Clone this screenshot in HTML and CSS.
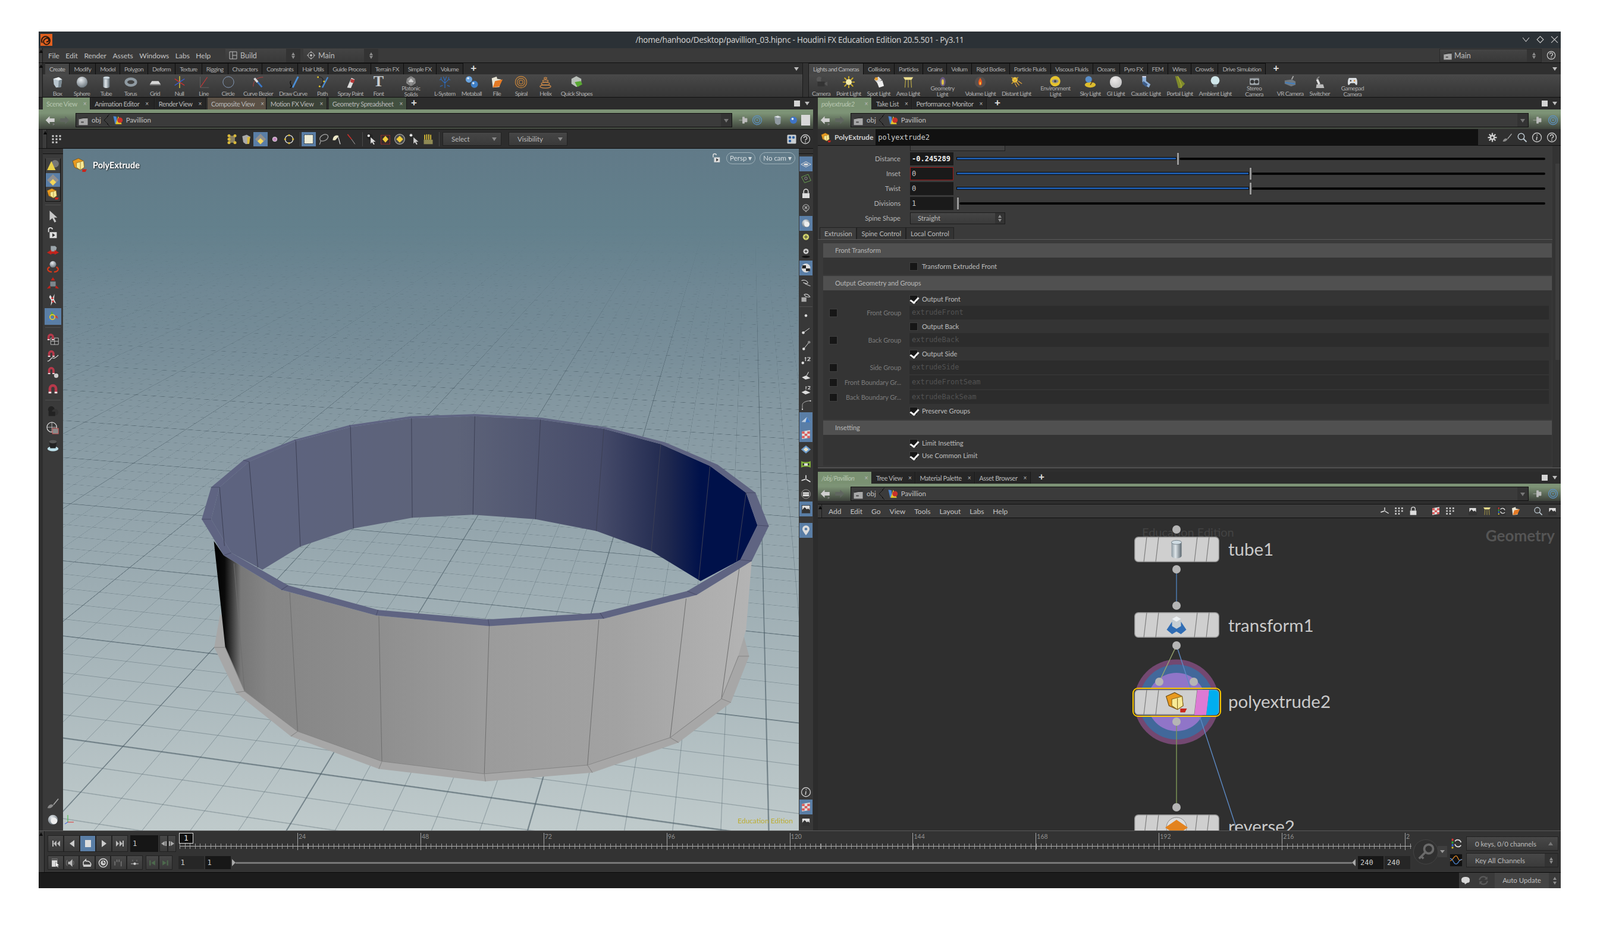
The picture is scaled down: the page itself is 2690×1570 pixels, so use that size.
FILE: index.html
```html
<!DOCTYPE html>
<html lang="en">
<head>
<meta charset="utf-8">
<title>Houdini FX</title>
<link rel="stylesheet" href="styles.css">
</head>
<body>
<svg class="defs" width="0" height="0">
<defs>
<linearGradient id="gMetal" x1="0" x2="1"><stop offset="0" stop-color="#8b98a0"/><stop offset=".4" stop-color="#dfe6ea"/><stop offset="1" stop-color="#59656d"/></linearGradient>
<radialGradient id="gSphere" cx=".4" cy=".3" r=".8"><stop offset="0" stop-color="#e8ecef"/><stop offset="1" stop-color="#5d6870"/></radialGradient>
<symbol id="box" viewBox="0 0 24 24"><path d="M4 6l10-3 6 4-2 14-9 1-4-6z" fill="#b9c6cf"/><path d="M4 6l10 3 6-2-6-4z" fill="#eef2f4"/><path d="M14 9l6-2-2 14-5 1z" fill="#7b8992"/></symbol>
<symbol id="sphere" viewBox="0 0 24 24"><circle cx="12" cy="12" r="10" fill="url(#gSphere)"/></symbol>
<symbol id="tube" viewBox="0 0 24 24"><path d="M6 4h12v16a6 3 0 0 1-12 0z" fill="url(#gMetal)"/><ellipse cx="12" cy="4" rx="6" ry="2.4" fill="#cfdbe2" stroke="#6b7780" stroke-width=".6"/></symbol>
<symbol id="torus" viewBox="0 0 24 24"><ellipse cx="12" cy="12" rx="9" ry="6" fill="none" stroke="#8f9aa2" stroke-width="5"/></symbol>
<symbol id="grid" viewBox="0 0 24 24"><path d="M6 10h12l4 6H2z" fill="#d8d8d8"/><path d="M2 16h20v2H2z" fill="#777"/></symbol>
<symbol id="null" viewBox="0 0 24 24"><path d="M12 1v22" stroke="#d8c33a" stroke-width="1.6"/><path d="M3 6l18 12" stroke="#d83030" stroke-width="1.6"/><path d="M21 6L3 18" stroke="#3a62d8" stroke-width="1.6"/></symbol>
<symbol id="line" viewBox="0 0 24 24"><path d="M5 22L18 3" stroke="#c03838" stroke-width="1.4"/><path d="M5 2v20h16" stroke="#666" stroke-width="1" fill="none"/></symbol>
<symbol id="circle" viewBox="0 0 24 24"><circle cx="12" cy="12" r="10" fill="none" stroke="#8ba2c2" stroke-width="1"/></symbol>
<symbol id="bezier" viewBox="0 0 24 24"><path d="M3 20C3 6 14 3 21 3" stroke="#c04040" fill="none"/><path d="M5 5l14 16" stroke="#3b78c8" stroke-width="3"/><path d="M5 5l6 7" stroke="#d8d8d8" stroke-width="4"/></symbol>
<symbol id="draw" viewBox="0 0 24 24"><path d="M6 22c8-2-4-8 2-12" stroke="#111" stroke-width="1.6" fill="none"/><path d="M11 22L21 2" stroke="#4b8fd8" stroke-width="3"/></symbol>
<symbol id="pathi" viewBox="0 0 24 24"><path d="M4 3c10-2 14 8 2 18" stroke="#222" fill="none" stroke-width="1.4"/><circle cx="4" cy="3" r="1.6" fill="#e3c62f"/><circle cx="15" cy="11" r="1.6" fill="#e3c62f"/><circle cx="7" cy="20" r="1.6" fill="#e3c62f"/><path d="M12 22L22 3" stroke="#4b8fd8" stroke-width="2.4"/></symbol>
<symbol id="spray" viewBox="0 0 24 24"><path d="M6 22L14 4l6 3-7 16z" fill="#dcdcdc"/><path d="M13 6l7 2-2 6-6-2z" fill="#b83a3a"/></symbol>
<symbol id="platonic" viewBox="0 0 24 24"><path d="M12 1l9 6 1 9-10 7L2 16l1-9z" fill="#8f8f8f"/><path d="M12 6l6 8H6z" fill="#d0d0d0"/><path d="M12 1v5M3 7l3 7M21 7l-3 7M12 23l-6-9M12 23l6-9" stroke="#4b4b4b" stroke-width=".7"/></symbol>
<symbol id="lsys" viewBox="0 0 24 24"><path d="M12 23V9M12 14L5 7M12 14l7-7M12 9L9 2M12 9l3-7M5 7L2 8M5 7V3M19 7l3 1M19 7V3M8 18l-5 2M16 18l5 2" stroke="#2c6ec4" stroke-width="1.2" fill="none"/></symbol>
<symbol id="metaball" viewBox="0 0 24 24"><circle cx="7" cy="7" r="6" fill="#6aa4e0"/><circle cx="17" cy="16" r="6.5" fill="#3f7fc6"/><circle cx="5.500" cy="5" r="2" fill="#dbe9f7"/><circle cx="15" cy="14" r="2" fill="#dbe9f7"/></symbol>
<symbol id="file" viewBox="0 0 24 24"><path d="M3 5l9-3 1 4 7 1-3 14-12 1z" fill="#e8e4d4"/><path d="M9 10l14-3-6 13-12 2z" fill="#e57a25"/></symbol>
<symbol id="spiral" viewBox="0 0 24 24"><circle cx="12" cy="12" r="10.500" fill="none" stroke="#d28a3a" stroke-width="1.2"/><circle cx="12" cy="12" r="7" fill="none" stroke="#d28a3a" stroke-width="1.2"/><circle cx="12" cy="12" r="3.500" fill="none" stroke="#d28a3a" stroke-width="1.2"/></symbol>
<symbol id="helix" viewBox="0 0 24 24"><g fill="none" stroke="#cf8a48" stroke-width="1.3"><ellipse cx="12" cy="20" rx="10" ry="3"/><ellipse cx="12" cy="15" rx="7.500" ry="2.500"/><ellipse cx="12" cy="10" rx="5" ry="2"/><ellipse cx="12" cy="5" rx="2.500" ry="1.500"/></g></symbol>
<symbol id="quick" viewBox="0 0 24 24"><path d="M12 1l9 5v9l-9 6-9-6V6z" fill="#b9bfb9"/><path d="M9 12l11-2 3 6-9 5z" fill="#59a832"/></symbol>
<symbol id="camera" viewBox="0 0 24 24"><circle cx="8" cy="7" r="5" fill="#555"/><circle cx="16" cy="8" r="5" fill="#444"/><rect x="5" y="11" width="13" height="9" fill="#333"/><path d="M18 14l5-3v8l-5-3z" fill="#555"/></symbol>
<symbol id="plight" viewBox="0 0 24 24"><circle cx="12" cy="12" r="5.500" fill="#f4ecae"/><path d="M12 1v5M12 18v5M1 12h5M18 12h5M4 4l4 4M16 16l4 4M20 4l-4 4M8 16l-4 4" stroke="#e3bd22" stroke-width="1.800"/></symbol>
<symbol id="spot" viewBox="0 0 24 24"><path d="M4 7l8-5 6 6-8 6z" fill="#d8d8d8"/><path d="M9 12l10-3 3 10-9 3z" fill="#eee"/><circle cx="8" cy="6" r="3" fill="#e09a30"/></symbol>
<symbol id="area" viewBox="0 0 24 24"><path d="M3 3h18l-3 5H6z" fill="#eddf8e"/><path d="M7 8l-1 14M12 8v14M17 8l1 14" stroke="#c6b34a" stroke-width="1.200"/></symbol>
<symbol id="geol" viewBox="0 0 24 24"><ellipse cx="12" cy="13" rx="6" ry="10" fill="#6b5a80"/><ellipse cx="12" cy="14" rx="2.500" ry="6" fill="#e0c44a"/></symbol>
<symbol id="voll" viewBox="0 0 24 24"><circle cx="12" cy="12" r="10" fill="#57504e"/><path d="M12 4c5 6 4 14 0 14s-5-8 0-14z" fill="#e8571c"/><path d="M12 11c2 3 1 6 0 6s-2-3 0-6z" fill="#f6d34a"/></symbol>
<symbol id="dist" viewBox="0 0 24 24"><circle cx="9" cy="8" r="5" fill="#eac64a"/><path d="M3 3l12 12M15 3L3 15" stroke="#d8a526" stroke-width="1.500"/><path d="M12 12l5 6M9 14l4 7M15 10l7 5" stroke="#d39c3f" stroke-width="1.500"/></symbol>
<symbol id="env" viewBox="0 0 24 24"><circle cx="12" cy="12" r="11" fill="#e6c32e"/><ellipse cx="12" cy="12" rx="7" ry="4" fill="#8c8c8c"/><circle cx="12" cy="12" r="2.500" fill="#444"/></symbol>
<symbol id="sky" viewBox="0 0 24 24"><ellipse cx="12" cy="17" rx="10" ry="5" fill="#dcbc2e"/><circle cx="9" cy="7" r="6" fill="#5a8ec8"/><path d="M12 17l7-10" stroke="#5a3a1e" stroke-width="1.500"/></symbol>
<symbol id="gi" viewBox="0 0 24 24"><circle cx="12" cy="12" r="11" fill="url(#gSphere)"/><circle cx="12" cy="12" r="11" fill="#efe9e6" opacity=".65"/></symbol>
<symbol id="caustic" viewBox="0 0 24 24"><path d="M6 1h7v9l8 6-3 6-10-6-2-5z" fill="#8eb0d8"/><path d="M6 1h7v2H6z" fill="#dde"/><path d="M8 10l8 6-3 5-7-6z" fill="#3c5c88"/></symbol>
<symbol id="portal" viewBox="0 0 24 24"><path d="M3 1h5l13 14-7 8H9z" fill="#7e8a2c"/><path d="M8 1l6 16v6" stroke="#c7bd3a" fill="none"/></symbol>
<symbol id="ambient" viewBox="0 0 24 24"><circle cx="12" cy="9" r="8" fill="#cfe6ea"/><path d="M9 16h6v5H9z" fill="#7a8488"/></symbol>
<symbol id="stereo" viewBox="0 0 24 24"><rect x="2" y="5" width="20" height="15" rx="2" fill="#a2a9ae"/><circle cx="7.500" cy="13" r="4" fill="#333"/><circle cx="16.500" cy="13" r="4" fill="#333"/><path d="M3 5l18-2v3H3z" fill="#555"/></symbol>
<symbol id="vr" viewBox="0 0 24 24"><path d="M2 9l13-2 7 4v6l-8 3-12-5z" fill="#6f7880"/><path d="M3 13l18 2" stroke="#3e7ec2" stroke-width="2"/><path d="M15 7l3-6" stroke="#aaa" stroke-width="2"/></symbol>
<symbol id="switch" viewBox="0 0 24 24"><path d="M5 23l1-7h12l2 7z" fill="#bbb"/><path d="M11 16L7 7" stroke="#ddd" stroke-width="4"/><path d="M6 7l5-5" stroke="#888" stroke-width="2"/></symbol>
<symbol id="pad" viewBox="0 0 24 24"><path d="M5 5h14c3 0 4 13 2 15-2 1-4-4-5-4H8c-1 0-3 5-5 4C1 18 2 5 5 5z" fill="#d9dde0"/><circle cx="8" cy="11" r="1.600" fill="#333"/><circle cx="16" cy="11" r="1.600" fill="#e08b2a"/></symbol>
<symbol id="polyx" viewBox="0 0 24 24"><path d="M1 6l9-4 8 4 1 10-6 4-9-4z" fill="#e89a20" stroke="#6b4a12" stroke-width=".7"/><path d="M7 9l11-3 1 10-6 4-6-4z" fill="#f7ea96" stroke="#8a6a20" stroke-width=".7"/><path d="M13 8v12" stroke="#8a6a20" stroke-width=".7"/><path d="M16 19h7l-2 4h-5z" fill="#c8261c"/></symbol>
<symbol id="back" viewBox="0 0 24 24"><path d="M10 3v5h11v8H10v5L1 12z" fill="#cfcfcf"/><path d="M17 18l5 3-5 3z" fill="#777"/></symbol>
<symbol id="fwd" viewBox="0 0 24 24"><path d="M14 3v5H3v8h11v5l9-9z" fill="#606660"/></symbol>
<symbol id="clap" viewBox="0 0 24 24"><rect x="2" y="8" width="20" height="15" fill="#a9a9a9"/><path d="M2 8l20-5v3L2 10z" fill="#333"/><path d="M7 15h6v3H7z" fill="#555"/></symbol>
<symbol id="obj" viewBox="0 0 24 24"><path d="M2 3l7 1 2 14-5 3z" fill="#4c86d0"/><path d="M13 3l8 18H7z" fill="#e5c62c"/><circle cx="17" cy="12" r="6" fill="#c8322a"/></symbol>
<symbol id="pin" viewBox="0 0 24 24"><path d="M2 12h8M10 5h4v14h-4zM14 8h6v8h-6z" stroke="#bbb" fill="#bbb" stroke-width="1"/></symbol>
<symbol id="target" viewBox="0 0 24 24"><circle cx="12" cy="12" r="10" fill="none" stroke="#5d8fbc" stroke-width="1.800"/><circle cx="12" cy="12" r="6" fill="none" stroke="#5d8fbc" stroke-width="1.800"/><circle cx="12" cy="12" r="1.600" fill="#5d8fbc"/></symbol>
<symbol id="cubeg" viewBox="0 0 24 24"><path d="M5 4l8-2 7 3-1 15-6 3-6-4z" fill="#909aa1"/><path d="M5 4l8 3 7-2-7-3z" fill="#d8dde0"/></symbol>
<symbol id="conesph" viewBox="0 0 24 24"><circle cx="16" cy="8" r="7" fill="#777"/><path d="M9 3l8 17H1z" fill="#e8cf4a"/></symbol>
<symbol id="dotb" viewBox="0 0 24 24"><circle cx="12" cy="12" r="8" fill="#3f74c6"/><circle cx="10" cy="9" r="2.500" fill="#e0ebf8"/></symbol>
<symbol id="help" viewBox="0 0 24 24"><circle cx="12" cy="12" r="10" fill="none" stroke="#c9c9c9" stroke-width="1.800"/><path d="M8.500 9.500a3.500 3.500 0 1 1 5 3c-1 .6-1.500 1-1.500 2.500" fill="none" stroke="#c9c9c9" stroke-width="2"/><circle cx="12" cy="18" r="1.300" fill="#c9c9c9"/></symbol>
<symbol id="info" viewBox="0 0 24 24"><circle cx="12" cy="12" r="10" fill="none" stroke="#c9c9c9" stroke-width="1.800"/><path d="M12 10l-1 8" stroke="#c9c9c9" stroke-width="2.200"/><circle cx="12.500" cy="6.500" r="1.300" fill="#c9c9c9"/></symbol>
<symbol id="gear" viewBox="0 0 24 24"><circle cx="12" cy="12" r="6" fill="#ccc"/><path d="M12 2v20M2 12h20M5 5l14 14M19 5L5 19" stroke="#ccc" stroke-width="3"/><circle cx="12" cy="12" r="2.500" fill="#333"/></symbol>
<symbol id="brush" viewBox="0 0 24 24"><path d="M2 21c2-7 8-8 11-5-3 5-7 6-11 5z" fill="#8a8a8a"/><path d="M13 15L22 4" stroke="#aaa" stroke-width="1.600"/></symbol>
<symbol id="mag" viewBox="0 0 24 24"><circle cx="10" cy="10" r="7" fill="none" stroke="#bcc8d0" stroke-width="2"/><path d="M15 15l7 7" stroke="#bcc8d0" stroke-width="2.500"/></symbol>
<symbol id="ptsel" viewBox="0 0 24 24"><path d="M6 5h12v14H6z" fill="#8a8060"/><circle cx="6" cy="5" r="3" fill="#d9b93a"/><circle cx="18" cy="5" r="3" fill="#d9b93a"/><circle cx="6" cy="12" r="3" fill="#d9b93a"/><circle cx="18" cy="19" r="3" fill="#d9b93a"/><circle cx="6" cy="19" r="3" fill="#d9b93a"/></symbol>
<symbol id="cubey" viewBox="0 0 24 24"><path d="M4 6l9-3 7 4-2 14-7 1-5-4z" fill="#a9a9a9"/><path d="M14 8l6-1-2 14-4 1z" fill="#d9b93a"/></symbol>
<symbol id="diam" viewBox="0 0 24 24"><path d="M12 1l11 11-11 11L1 12z" fill="#8f8f8f"/><path d="M12 10l6 6-6 6-6-6z" fill="#f3d75a"/></symbol>
<symbol id="dot" viewBox="0 0 24 24"><circle cx="12" cy="12" r="4.500" fill="#c48ac0" stroke="#eee" stroke-width="1"/></symbol>
<symbol id="ringp" viewBox="0 0 24 24"><circle cx="12" cy="12" r="8" fill="none" stroke="#ddd" stroke-width="1.600"/><circle cx="12" cy="4" r="2" fill="#d9b93a"/><circle cx="4" cy="12" r="2" fill="#d9b93a"/><circle cx="20" cy="12" r="2" fill="#d9b93a"/><circle cx="12" cy="20" r="2" fill="#d9b93a"/></symbol>
<symbol id="rectsel" viewBox="0 0 24 24"><rect x="3" y="3" width="18" height="18" fill="#ecebd6" stroke="#111" stroke-dasharray="2 1"/></symbol>
<symbol id="lasso" viewBox="0 0 24 24"><ellipse cx="14" cy="9" rx="9" ry="6" fill="none" stroke="#aaa" stroke-width="1.500" transform="rotate(-30 14 9)"/><path d="M8 15L5 23" stroke="#aaa" stroke-width="1.400"/></symbol>
<symbol id="brushs" viewBox="0 0 24 24"><path d="M3 14c0-9 8-12 12-8l-7 8z" fill="#eee8c8"/><path d="M14 8l4 14" stroke="#ddd" stroke-width="1.500"/></symbol>
<symbol id="laser" viewBox="0 0 24 24"><path d="M4 2l8 10" stroke="#c8302a" stroke-width="2"/><path d="M12 12l7 10" stroke="#bbb" stroke-width="1"/></symbol>
<symbol id="arrow" viewBox="0 0 24 24"><path d="M6 1v18l5-4 4 8 3-2-4-7h6z" fill="#c8c8c8"/></symbol>
<symbol id="picka" viewBox="0 0 24 24"><circle cx="9" cy="7" r="6" fill="#222"/><circle cx="7" cy="5" r="2.500" fill="#eee"/><path d="M11 8v13l3-3 3 5 2-1-3-5h5z" fill="#ddd"/></symbol>
<symbol id="pickb" viewBox="0 0 24 24"><rect x="3" y="4" width="18" height="18" fill="#3a2b2b" stroke="#c33" stroke-dasharray="2 1"/><path d="M12 5l6 7-6 7-6-7z" fill="#f0cc3a"/></symbol>
<symbol id="pickc" viewBox="0 0 24 24"><circle cx="12" cy="12" r="10" fill="#4a4a4a" stroke="#aaa" stroke-width="1.400"/><path d="M12 5l7 7-7 7-7-7z" fill="#f0cc3a"/></symbol>
<symbol id="pickd" viewBox="0 0 24 24"><path d="M6 1v6M3 4h6M4 2l4 4M8 2L4 6" stroke="#eee" stroke-width="1.300"/><path d="M11 8v13l3-3 3 5 2-1-3-5h5z" fill="#ccc"/></symbol>
<symbol id="picke" viewBox="0 0 24 24"><path d="M3 13h18v9H3z" fill="#8f8a55"/><path d="M5 13V3M9 13V2M13 13V2M17 13V3" stroke="#e6c83a" stroke-width="2"/></symbol>
<symbol id="lock" viewBox="0 0 24 24"><rect x="6" y="10" width="13" height="11" fill="#ddd"/><path d="M4 10V5c0-4 7-4 7 0" fill="none" stroke="#ddd" stroke-width="2"/><path d="M11 12v7l5-3.500z" fill="#333"/></symbol>
<symbol id="xf" viewBox="0 0 24 24"><path d="M8 5l8 0 3 3-2 7H8z" fill="#9ba5ab"/><path d="M1 17l8-5v3h6v-3l8 5-8 4v-2H9v2z" fill="#c4231b"/></symbol>
<symbol id="xfb" viewBox="0 0 24 24"><path d="M1 17l6-9 5 2 5-2 6 9-6 5-5-3-5 3z" fill="#2f6cb4"/><path d="M7 5l5-3 5 3v8l-5 3-5-3z" fill="#c6ced4"/><path d="M7 5l5 3 5-3-5-3z" fill="#eef1f3"/></symbol>
<symbol id="rot" viewBox="0 0 24 24"><circle cx="12" cy="8" r="6" fill="url(#gSphere)"/><path d="M6 13c-7 3-3 9 4 9M18 13c7 3 3 9-4 9" fill="none" stroke="#d4391b" stroke-width="2.500"/></symbol>
<symbol id="scl" viewBox="0 0 24 24"><path d="M7 9h10v9H7z" fill="#7d878d"/><path d="M12 1l4 6H8zM1 22l5-6 2 5zM23 22l-5-6-2 5z" fill="#c4231b"/></symbol>
<symbol id="hand" viewBox="0 0 24 24"><path d="M7 3l4 6 4-8-1 10 4 8-6-4-4 8 1-10-4-6z" fill="#ddd"/><circle cx="11" cy="9" r="2" fill="#c33"/><circle cx="12" cy="15" r="2" fill="#c33"/></symbol>
<symbol id="gizmo" viewBox="0 0 24 24"><path d="M10 2l4 9H7z" fill="#5aa63c"/><path d="M12 12l10 4-3-6z" fill="#c8423c"/><path d="M10 12l-8 8 8-1z" fill="#4c82c8"/><circle cx="11" cy="13" r="4.500" fill="none" stroke="#e8c92e" stroke-width="2"/></symbol>
<symbol id="mg" viewBox="0 0 24 24"><path d="M4 20V11a8 8 0 0 1 16 0v9h-5v-9a3 3 0 0 0-6 0v9z" fill="#b5394a"/><path d="M4 17h5v3H4zM15 17h5v3h-5z" fill="#eee"/></symbol>
<symbol id="mgg" viewBox="0 0 24 24"><path d="M8 10h14v12H8zM15 10v12M8 16h14" fill="#333" stroke="#ccc"/><path d="M2 14V8a6 6 0 0 1 12 0v6h-4V8a2 2 0 0 0-4 0v6z" fill="#b5394a"/><path d="M2 12h4v2H2zM10 12h4v2h-4z" fill="#eee"/></symbol>
<symbol id="mgc" viewBox="0 0 24 24"><path d="M2 22c6 0 6-8 10-6s6-2 10-5" fill="none" stroke="#ddd" stroke-width="1.300"/><path d="M3 14V8a6 6 0 0 1 12 0v6h-4V8a2 2 0 0 0-4 0v6z" fill="#b5394a"/><path d="M3 12h4v2H3zM11 12h4v2h-4z" fill="#eee"/></symbol>
<symbol id="mgb" viewBox="0 0 24 24"><circle cx="18" cy="18" r="4" fill="#ccc"/><path d="M3 15V8a6 6 0 0 1 12 0v7h-4V8a2 2 0 0 0-4 0v7z" fill="#b5394a"/><path d="M3 13h4v2H3zM11 13h4v2h-4z" fill="#eee"/></symbol>
<symbol id="gizcam" viewBox="0 0 24 24"><circle cx="9" cy="8" r="6" fill="#222"/><circle cx="16" cy="13" r="6" fill="#333"/><rect x="4" y="12" width="12" height="8" fill="#222"/></symbol>
<symbol id="globe" viewBox="0 0 24 24"><circle cx="10" cy="10" r="9" fill="none" stroke="#ddd" stroke-width="1.300"/><path d="M1 10h18M10 1v18" stroke="#ddd" stroke-width=".8"/><rect x="11" y="12" width="11" height="10" fill="#8a8a8a" stroke="#d05050"/></symbol>
<symbol id="lens" viewBox="0 0 24 24"><ellipse cx="12" cy="19" rx="10" ry="4.500" fill="#bde0ea"/><path d="M5 6h14l-2 12H7z" fill="#222"/><ellipse cx="12" cy="6" rx="7" ry="3" fill="#555"/></symbol>
<symbol id="view" viewBox="0 0 24 24"><path d="M1 13l11-6 11 6-11 6z" fill="none" stroke="#ddd" stroke-width="1.300"/><ellipse cx="12" cy="13" rx="5" ry="2.500" fill="#ddd"/></symbol>
<symbol id="vieweye" viewBox="0 0 24 24"><path d="M2 8l15-6 6 14-14 5z" fill="none" stroke="#68a050" stroke-width="1.300"/><circle cx="12" cy="11" r="3" fill="none" stroke="#aaa"/></symbol>
<symbol id="padlock" viewBox="0 0 24 24"><rect x="4" y="11" width="16" height="11" fill="#ddd"/><path d="M7 11V7a5 5 0 0 1 10 0v4" fill="none" stroke="#ddd" stroke-width="2"/></symbol>
<symbol id="bulbx" viewBox="0 0 24 24"><circle cx="12" cy="10" r="7" fill="none" stroke="#bbb" stroke-width="1.400"/><path d="M9 7l6 6M15 7l-6 6M10 19h4" stroke="#bbb" stroke-width="1.500"/></symbol>
<symbol id="ball" viewBox="0 0 24 24"><circle cx="12" cy="12" r="9" fill="url(#gSphere)"/><circle cx="14" cy="14" r="6" fill="#eee"/></symbol>
<symbol id="bulbp" viewBox="0 0 24 24"><circle cx="12" cy="9" r="7" fill="#cfcf6a"/><path d="M9 19h6M12 5v8M8 9h8" stroke="#333" stroke-width="1.400"/></symbol>
<symbol id="bulbg" viewBox="0 0 24 24"><circle cx="12" cy="8" r="6" fill="#ccc"/><ellipse cx="12" cy="20" rx="9" ry="2.500" fill="#111"/><path d="M9 8h6M12 5v6" stroke="#222" stroke-width="1.400"/></symbol>
<symbol id="checker" viewBox="0 0 24 24"><circle cx="12" cy="12" r="10" fill="#ddd"/><path d="M4 6h8v7H3zM12 13h9v6h-9z" fill="#222"/></symbol>
<symbol id="glass" viewBox="0 0 24 24"><path d="M2 7c6-3 12 0 14 4s-8 2-10 0M10 14l12 5" fill="none" stroke="#ccc" stroke-width="1.500"/></symbol>
<symbol id="glass2" viewBox="0 0 24 24"><path d="M8 5c5-3 10 0 13 5-5 1-10 0-13-5z" fill="none" stroke="#ccc" stroke-width="1.500"/><rect x="2" y="11" width="11" height="10" fill="#aaa"/></symbol>
<symbol id="pt" viewBox="0 0 24 24"><circle cx="12" cy="12" r="3" fill="#ddd"/></symbol>
<symbol id="nrm" viewBox="0 0 24 24"><circle cx="6" cy="17" r="3" fill="#ddd"/><path d="M6 17L20 7" stroke="#ddd" stroke-width="1.300"/></symbol>
<symbol id="nrm2" viewBox="0 0 24 24"><circle cx="7" cy="20" r="3" fill="#ddd"/><path d="M7 20L19 5" stroke="#ddd" stroke-width="1.300"/><circle cx="19" cy="5" r="3" fill="#888"/></symbol>
<symbol id="ptn" viewBox="0 0 24 24"><circle cx="5" cy="18" r="3" fill="#ddd"/><path d="M9 7h4M11 5v9M15 6h6v2l-5 5h6" stroke="#ddd" stroke-width="1.600" fill="none"/></symbol>
<symbol id="prm" viewBox="0 0 24 24"><path d="M3 17l9-4 10 6-11 3z" fill="#ddd"/><path d="M13 14l5-9" stroke="#ccc" stroke-width="1.500"/></symbol>
<symbol id="prn" viewBox="0 0 24 24"><path d="M2 17l9-4 11 5-11 4z" fill="#ddd"/><path d="M11 5h3M12 4v7M16 4h5v2l-4 4h5" stroke="#ddd" stroke-width="1.400" fill="none"/></symbol>
<symbol id="crv" viewBox="0 0 24 24"><path d="M4 22V12C4 7 12 3 22 3" fill="none" stroke="#bbb" stroke-width="1.200"/><circle cx="4" cy="22" r="1.500" fill="#ddd"/><circle cx="22" cy="3" r="1.500" fill="#ddd"/></symbol>
<symbol id="shade" viewBox="0 0 24 24"><path d="M2 17L14 6l8 12z" fill="#bfcfe0"/><path d="M14 6l8 12H11z" fill="#3d78c4"/></symbol>
<symbol id="chk" viewBox="0 0 24 24"><path d="M3 5l18-3v17l-18 3z" fill="#ddd"/><path d="M3 5h6v5H3zM15 5h6v5h-6zM9 10h6v5H9zM3 15h6v5H3zM15 15h6v5h-6z" fill="#d95a5a"/></symbol>
<symbol id="diab" viewBox="0 0 24 24"><path d="M12 3l11 9-11 9L1 12z" fill="#6d9ccc"/><path d="M12 7l6 5-6 5-6-5z" fill="#e7e0c8"/></symbol>
<symbol id="cage" viewBox="0 0 24 24"><path d="M3 7c4 2 14 2 18 0v10c-4-2-14-2-18 0z" fill="none" stroke="#84b53a" stroke-width="3"/><rect x="8" y="10" width="8" height="5" fill="#ddd"/></symbol>
<symbol id="tri" viewBox="0 0 24 24"><path d="M12 3v8M2 15l9-3M22 18l-10-6" stroke="#eee" stroke-width="2"/><circle cx="12" cy="12" r="2" fill="#999"/></symbol>
<symbol id="barc" viewBox="0 0 24 24"><circle cx="12" cy="12" r="10" fill="none" stroke="#aaa" stroke-width="1.200"/><rect x="5" y="8" width="14" height="9" fill="#ddd"/><path d="M5 12h14" stroke="#555"/></symbol>
<symbol id="bg" viewBox="0 0 24 24"><rect x="3" y="4" width="18" height="17" fill="#ddd" stroke="#222"/><path d="M3 15l6-7 5 5 3-2 4 4v6H3z" fill="#333"/></symbol>
<symbol id="mappin" viewBox="0 0 24 24"><path d="M12 23C5 14 4 11 4 9a8 8 0 0 1 16 0c0 2-1 5-8 14z" fill="#ddd"/><circle cx="12" cy="9" r="3" fill="#5a7ea6"/></symbol>
<symbol id="keys" viewBox="0 0 24 24"><circle cx="16" cy="8" r="6" fill="none" stroke="#6a6a6a" stroke-width="3"/><path d="M12 12L3 21M6 18l3 3" stroke="#6a6a6a" stroke-width="3"/></symbol>
<symbol id="sync" viewBox="0 0 24 24"><path d="M3 11a9 9 0 0 1 16-4M21 13a9 9 0 0 1-16 4" fill="none" stroke="#5a5a5a" stroke-width="3"/><path d="M21 3v7h-7zM3 21v-7h7z" fill="#5a5a5a"/></symbol>
<symbol id="brain" viewBox="0 0 24 24"><path d="M3 12c-2-5 4-9 9-8 5-1 11 3 9 8 1 3-2 6-5 5-2 2-4 2-5 4l-2-4c-3 1-7-2-6-5z" fill="#d8d8d8"/></symbol>
<symbol id="chan" viewBox="0 0 24 24"><rect x="1" y="1" width="22" height="22" fill="#333"/><path d="M4 3h3v4H4z" fill="#d33"/><path d="M4 8h3v4H4z" fill="#3a3"/><path d="M4 13h3v4H4z" fill="#36d"/><path d="M4 18h3v3H4z" fill="#dc3"/><path d="M10 8a6 6 0 0 1 11 2M21 15a6 6 0 0 1-11-2" fill="none" stroke="#ddd" stroke-width="2"/></symbol>
<symbol id="wave" viewBox="0 0 24 24"><rect x="1" y="1" width="22" height="22" fill="#111"/><path d="M1 13c5 0 7-9 11-9s4 14 11 6" fill="none" stroke="#e08b2a" stroke-width="1.400"/><path d="M1 9c6 0 6 10 11 10s5-10 11-8" fill="none" stroke="#4c82c8" stroke-width="1.400"/></symbol>
<symbol id="dots" viewBox="0 0 24 24"><path d="M2 3h4v4H2zM10 3h4v4h-4zM18 3h4v4h-4zM2 10h4v4H2zM10 10h4v4h-4zM18 10h4v4h-4zM2 17h4v4H2zM10 17h4v4h-4z" fill="#ccc"/></symbol>
<symbol id="icon-mv" viewBox="0 0 24 24"><rect x="2" y="2" width="20" height="20" rx="2" fill="#c9cdd0"/><circle cx="8" cy="8" r="3" fill="#2e5f9e"/><circle cx="16" cy="8" r="3" fill="#2e5f9e"/><circle cx="8" cy="16" r="3" fill="#2e5f9e"/></symbol>
<symbol id="docc" viewBox="0 0 24 24"><rect x="3" y="2" width="13" height="19" fill="#ddd"/><path d="M3 2h13v4H3z" fill="#555"/><path d="M12 10v12l3-3 2 4 2-1-2-4h4z" fill="#fff" stroke="#222" stroke-width=".6"/></symbol>
<symbol id="speak" viewBox="0 0 24 24"><path d="M5 9h4l6-6v18l-6-6H5z" fill="#bbb"/><path d="M17 7c2 3 2 7 0 10M3 5c-3 5-3 9 0 14" fill="none" stroke="#999"/></symbol>
<symbol id="undo" viewBox="0 0 24 24"><path d="M3 10l6-6v4c7-1 12 2 12 9H3z" fill="none" stroke="#ddd" stroke-width="2"/><path d="M3 18h18v3H3z" fill="#ddd"/></symbol>
<symbol id="clock" viewBox="0 0 24 24"><circle cx="12" cy="12" r="10" fill="none" stroke="#ddd" stroke-width="2"/><circle cx="12" cy="12" r="6" fill="#ccc"/><path d="M12 7v5h4" stroke="#222" stroke-width="1.500" fill="none"/></symbol>
<symbol id="barsi" viewBox="0 0 24 24"><path d="M3 8v10M8 4v6M13 4v6M18 8v12" stroke="#888" stroke-width="1.600"/></symbol>
<symbol id="sldi" viewBox="0 0 24 24"><path d="M3 14h18" stroke="#999" stroke-width="2"/><circle cx="12" cy="14" r="3" fill="#ccc"/><path d="M7 9l-2-4h4zM17 9l-2-4h4z" fill="#666"/></symbol>
<symbol id="nodebody" viewBox="0 0 143 43"><rect x=".7" y=".7" width="141.600" height="41.600" rx="6" fill="#cfcfcf" stroke="#8f8f8f" stroke-width="1.400"/><path d="M21 0l-5 43M41 0l-5 43M106 0l-5 43M126 0l-5 43" stroke="#7d7d7d" stroke-width="1.200"/></symbol>
</defs>
</svg>

<div class="app">
  <header class="titlebar">
    <svg class="logo" viewBox="0 0 20 20"><rect width="20" height="20" fill="#e2601f"/><path d="M3 15a7 7 0 1 1 10 2 5 5 0 1 1-4-9 3 3 0 1 1 1 5" fill="none" stroke="#2a1a10" stroke-width="2"/></svg>
    <span class="title-text">/home/hanhoo/Desktop/pavillion_03.hipnc - Houdini FX Education Edition 20.5.501 - Py3.11</span>
    <div class="winbtns">
      <svg viewBox="0 0 12 12"><path d="M1 3l5 6 5-6" fill="none" stroke="#ccc"/></svg>
      <svg viewBox="0 0 12 12"><path d="M6 1l5 5-5 5-5-5z" fill="none" stroke="#ccc"/></svg>
      <svg viewBox="0 0 12 12"><path d="M1 1l10 10M11 1L1 11" stroke="#ccc"/></svg>
    </div>
  </header>

  <nav class="menubar">
    <span class="grip"></span>
    <div class="menu"><span>File</span><span>Edit</span><span>Render</span><span>Assets</span><span>Windows</span><span>Labs</span><span>Help</span></div>
    <div class="combo c-build"><svg class="ci" viewBox="0 0 14 14"><path d="M1 1h12v12H1zM6 1v12M6 7h7" fill="none" stroke="#bbb"/></svg><span>Build</span><i class="updn"></i></div>
    <div class="combo c-main"><svg class="ci" viewBox="0 0 14 14"><circle cx="7" cy="7" r="5" fill="none" stroke="#bbb"/><circle cx="7" cy="7" r="2" fill="#bbb"/><path d="M7 0v3M7 11v3M0 7h3M11 7h3" stroke="#bbb"/></svg><span>Main</span><i class="updn"></i></div>
    <div class="fill"></div>
    <div class="combo c-desk"><svg class="ci ci-lg"><use href="#clap"/></svg><span>Main</span><i class="updn"></i></div>
    <svg class="i16 helpbtn"><use href="#help"/></svg>
  </nav>

  <section class="shelves">
    <span class="grip"></span>
    <div class="shelf shelf-l">
      <div class="shelf-tabs">
        <span class="stab on">Create</span><span class="stab">Modify</span><span class="stab">Model</span><span class="stab">Polygon</span><span class="stab">Deform</span><span class="stab">Texture</span><span class="stab">Rigging</span><span class="stab">Characters</span><span class="stab">Constraints</span><span class="stab">Hair Utils</span><span class="stab">Guide Process</span><span class="stab">Terrain FX</span><span class="stab">Simple FX</span><span class="stab">Volume</span><b class="plus">+</b><i class="fill"></i><i class="dn"></i>
      </div>
      <div class="shelf-tools">
        <div class="tool"><svg><use href="#box"/></svg><span>Box</span></div>
        <div class="tool"><svg><use href="#sphere"/></svg><span>Sphere</span></div>
        <div class="tool"><svg><use href="#tube"/></svg><span>Tube</span></div>
        <div class="tool"><svg><use href="#torus"/></svg><span>Torus</span></div>
        <div class="tool"><svg><use href="#grid"/></svg><span>Grid</span></div>
        <div class="tool"><svg><use href="#null"/></svg><span>Null</span></div>
        <div class="tool"><svg><use href="#line"/></svg><span>Line</span></div>
        <div class="tool"><svg><use href="#circle"/></svg><span>Circle</span></div>
        <div class="tool"><svg><use href="#bezier"/></svg><span>Curve Bezier</span></div>
        <div class="tool"><svg><use href="#draw"/></svg><span>Draw Curve</span></div>
        <div class="tool"><svg><use href="#pathi"/></svg><span>Path</span></div>
        <div class="tool"><svg><use href="#spray"/></svg><span>Spray Paint</span></div>
        <div class="tool"><span class="t-font">T</span><span>Font</span></div>
        <div class="tool two w68"><svg><use href="#platonic"/></svg><span>Platonic<br>Solids</span></div>
        <div class="tool"><svg><use href="#lsys"/></svg><span>L-System</span></div>
        <div class="tool"><svg><use href="#metaball"/></svg><span>Metaball</span></div>
        <div class="tool"><svg><use href="#file"/></svg><span>File</span></div>
        <div class="tool"><svg><use href="#spiral"/></svg><span>Spiral</span></div>
        <div class="tool"><svg><use href="#helix"/></svg><span>Helix</span></div>
        <div class="tool"><svg><use href="#quick"/></svg><span>Quick Shapes</span></div>
      </div>
    </div>
    <span class="shelf-sep"></span>
    <div class="shelf shelf-r">
      <div class="shelf-tabs">
        <span class="stab on">Lights and Cameras</span><span class="stab">Collisions</span><span class="stab">Particles</span><span class="stab">Grains</span><span class="stab">Vellum</span><span class="stab">Rigid Bodies</span><span class="stab">Particle Fluids</span><span class="stab">Viscous Fluids</span><span class="stab">Oceans</span><span class="stab">Pyro FX</span><span class="stab">FEM</span><span class="stab">Wires</span><span class="stab">Crowds</span><span class="stab">Drive Simulation</span><b class="plus">+</b><i class="fill"></i><i class="dn"></i>
      </div>
      <div class="shelf-tools">
        <div class="tool"><svg><use href="#camera"/></svg><span>Camera</span></div>
        <div class="tool"><svg><use href="#plight"/></svg><span>Point Light</span></div>
        <div class="tool"><svg><use href="#spot"/></svg><span>Spot Light</span></div>
        <div class="tool"><svg><use href="#area"/></svg><span>Area Light</span></div>
        <div class="tool two w66"><svg><use href="#geol"/></svg><span>Geometry<br>Light</span></div>
        <div class="tool"><svg><use href="#voll"/></svg><span>Volume Light</span></div>
        <div class="tool"><svg><use href="#dist"/></svg><span>Distant Light</span></div>
        <div class="tool two w72"><svg><use href="#env"/></svg><span>Environment<br>Light</span></div>
        <div class="tool"><svg><use href="#sky"/></svg><span>Sky Light</span></div>
        <div class="tool"><svg><use href="#gi"/></svg><span>GI Light</span></div>
        <div class="tool"><svg><use href="#caustic"/></svg><span>Caustic Light</span></div>
        <div class="tool"><svg><use href="#portal"/></svg><span>Portal Light</span></div>
        <div class="tool"><svg><use href="#ambient"/></svg><span>Ambient Light</span></div>
        <div class="tool two w66"><svg><use href="#stereo"/></svg><span>Stereo<br>Camera</span></div>
        <div class="tool"><svg><use href="#vr"/></svg><span>VR Camera</span></div>
        <div class="tool"><svg><use href="#switch"/></svg><span>Switcher</span></div>
        <div class="tool two w66"><svg><use href="#pad"/></svg><span>Gamepad<br>Camera</span></div>
      </div>
    </div>
  </section>

  <main class="work">
    <section class="pane-left">
      <div class="ptabs">
        <span class="ptab green">Scene View<i>×</i></span><span class="ptab t-anim">Animation Editor<i>×</i></span><span class="ptab">Render View<i>×</i></span><span class="ptab brown">Composite View<i>×</i></span><span class="ptab olive">Motion FX View<i>×</i></span><span class="ptab moss">Geometry Spreadsheet<i>×</i></span><b class="plus">+</b><i class="fill"></i><i class="sq"></i><i class="dn"></i>
      </div>
      <div class="pathrow">
        <svg class="nav"><use href="#back"/></svg><svg class="nav"><use href="#fwd"/></svg>
        <div class="pathbar"><svg class="pi"><use href="#clap"/></svg><span>obj</span><i class="chev"></i><svg class="pi"><use href="#obj"/></svg><span>Pavillion</span><i class="fill"></i><i class="pdrop"></i></div>
        <svg class="i18 pinb"><use href="#pin"/></svg><svg class="i18 tgt"><use href="#target"/></svg><svg class="i18 cube"><use href="#cubeg"/></svg><svg class="i18 dotg"><use href="#dotb"/></svg><i class="whitesq"></i>
      </div>
      <div class="viewbar">
        <span class="grip"></span>
        <svg class="i18 vdots"><use href="#dots"/></svg>
        <div class="vtools">
          <svg class="vt"><use href="#ptsel"/></svg><svg class="vt"><use href="#cubey"/></svg><svg class="vt on"><use href="#diam"/></svg><svg class="vt"><use href="#dot"/></svg><svg class="vt"><use href="#ringp"/></svg><i class="vsep"></i>
          <svg class="vt on"><use href="#rectsel"/></svg><svg class="vt"><use href="#lasso"/></svg><svg class="vt"><use href="#brushs"/></svg><svg class="vt"><use href="#laser"/></svg><i class="vsep"></i>
          <svg class="vt"><use href="#picka"/></svg><svg class="vt"><use href="#pickb"/></svg><svg class="vt"><use href="#pickc"/></svg><svg class="vt"><use href="#pickd"/></svg><svg class="vt"><use href="#picke"/></svg><i class="vsep"></i>
        </div>
        <div class="dd dd-sel"><span>Select</span><i class="dn"></i></div>
        <div class="dd"><span>Visibility</span><i class="dn"></i></div>
        <div class="fill"></div>
        <svg class="i18"><use href="#icon-mv"/></svg><svg class="i18 gapl6"><use href="#help"/></svg>
      </div>
      <div class="viewrow">
        <aside class="ltools">
          <i class="handle"></i>
          <div class="lgroup"><svg class="lt"><use href="#conesph"/></svg><svg class="lt on"><use href="#diam"/></svg><svg class="lt"><use href="#polyx"/></svg></div>
          <i class="lsep first"></i>
          <svg class="lt"><use href="#arrow"/></svg><svg class="lt"><use href="#lock"/></svg><svg class="lt"><use href="#xf"/></svg><svg class="lt"><use href="#rot"/></svg><svg class="lt"><use href="#scl"/></svg><svg class="lt"><use href="#hand"/></svg><svg class="lt on"><use href="#gizmo"/></svg>
          <i class="lsep"></i>
          <svg class="lt"><use href="#mgg"/></svg><svg class="lt"><use href="#mgc"/></svg><svg class="lt"><use href="#mgb"/></svg><svg class="lt"><use href="#mg"/></svg>
          <i class="lsep"></i>
          <svg class="lt"><use href="#gizcam"/></svg><svg class="lt"><use href="#globe"/></svg><svg class="lt"><use href="#lens"/></svg>
          <i class="fill"></i>
          <svg class="lt"><use href="#brush"/></svg><svg class="lt"><use href="#ball"/></svg>
        </aside>
        <div class="viewport">
          <div class="floor"></div>
          <div class="fog"></div>
          <svg class="ring" viewBox="0 0 1568 1568" preserveAspectRatio="none">
            <defs>
              <linearGradient id="gWall" gradientUnits="userSpaceOnUse" x1="30" x2="1525" y1="0" y2="0"><stop offset="0" stop-color="#5d6380"/><stop offset=".45" stop-color="#5d6379"/><stop offset=".7" stop-color="#474c6a"/><stop offset=".82" stop-color="#20294f"/><stop offset=".88" stop-color="#00114a"/><stop offset="1" stop-color="#00114a"/></linearGradient>
              <linearGradient id="gOut" gradientUnits="userSpaceOnUse" x1="62" x2="1480" y1="0" y2="0"><stop offset="0" stop-color="#000"/><stop offset=".02" stop-color="#0a0a0a"/><stop offset=".05" stop-color="#777"/><stop offset=".1" stop-color="#858585"/><stop offset=".3" stop-color="#8e8e8e"/><stop offset=".5" stop-color="#9b9b9b"/><stop offset=".75" stop-color="#a2a2a2"/><stop offset="1" stop-color="#b4b4b4"/></linearGradient>
            </defs>
            <polygon points="78,840 63,970 120,1150 265,1325 497,1455 778,1505 1060,1470 1287,1350 1425,1190 1473,1005 1455,900" fill="#a7a7a7"/>
            <polygon points="62,545 88,602 240,740 490,842 788,885 1090,855 1335,760 1480,625 1465,900 1445,1000 1400,1175 1265,1330 1047,1440 775,1475 505,1425 283,1305 143,1145 92,970" fill="url(#gOut)"/>
            <polygon points="55,458 77,330 155,228 278,146 422,90 583,55 750,47 923,60 1090,97 1240,158 1370,245 1465,352 1495,482 1450,620 1345,705 1215,585 1070,505 910,458 745,440 585,452 430,495 290,567 190,660 108,592" fill="url(#gWall)"/>
            <path d="M30 458L55 330 140 222 275 140 420 82 580 47 750 38 925 52 1095 90 1250 150 1390 240 1490 352 1525 485 1480 625 1335 760 1090 855 788 885 490 842 240 740 88 602ZM55 458L108 592 258 722 495 820 785 858 1080 832 1310 745 1450 620 1495 482 1465 352 1370 245 1240 158 1090 97 923 60 750 47 583 55 422 90 278 146 155 228 77 330Z" fill="#5f6482" fill-rule="evenodd"/>
            <path vector-effect="non-scaling-stroke" fill="none" stroke="#3d4055" d="M77 330L90 565M155 228L178 650M278 146L290 567M422 90L430 495M583 55L585 452M750 47L745 440M923 60L910 458M1090 97L1070 505M1240 158L1215 585M1370 245L1340 700M1465 352L1440 625"/>
            <path vector-effect="non-scaling-stroke" fill="none" stroke="#494c68" d="M30 458H55M55 330L77 330M140 222L155 228M275 140L278 146M420 82L422 90M88 602L108 592M240 740L258 722M490 842L495 820M788 885L785 858M1090 855L1080 832M1335 760L1310 745M1480 625L1450 620M1525 485L1495 482M1490 352L1465 352"/>
            <path vector-effect="non-scaling-stroke" fill="none" stroke="#6e6e6e" d="M115 635L143 1145M262 750L283 1305M497 845L505 1425M788 885L775 1475M1077 860L1047 1440M1307 775L1265 1330M1447 655L1400 1175"/>
            <path vector-effect="non-scaling-stroke" fill="none" stroke="#858585" d="M143 1145L120 1150M283 1305L265 1325M505 1425L497 1455M775 1475L778 1505M1047 1440L1060 1470M1265 1330L1287 1350M1400 1175L1425 1190M1445 1005L1473 1005M92 970L63 970M92 970L143 1145 283 1305 505 1425 775 1475 1047 1440 1265 1330 1400 1175 1445 1005"/>
          </svg>
          <div class="vhead"><svg><use href="#polyx"/></svg><span>PolyExtrude</span></div>
          <div class="vpills"><svg class="i18"><use href="#lock"/></svg><span class="pill">Persp ▾</span><span class="pill">No cam ▾</span></div>
          <span class="edu">Education Edition</span>
          <svg class="axis" viewBox="0 0 20 20"><path d="M6 16V4" stroke="#3fbf3f"/><path d="M6 16h10" stroke="#e03030"/><path d="M6 16l-5 3" stroke="#3050e0"/></svg>
        </div>
        <aside class="rtools">
          <i class="handle"></i>
          <svg class="rt on"><use href="#view"/></svg><svg class="rt"><use href="#vieweye"/></svg><svg class="rt"><use href="#padlock"/></svg><svg class="rt"><use href="#bulbx"/></svg><svg class="rt on"><use href="#ball"/></svg><svg class="rt"><use href="#bulbp"/></svg><svg class="rt"><use href="#bulbg"/></svg><svg class="rt on"><use href="#checker"/></svg><svg class="rt"><use href="#glass"/></svg><svg class="rt"><use href="#glass2"/></svg>
          <i class="lsep"></i>
          <svg class="rt"><use href="#pt"/></svg><svg class="rt"><use href="#nrm"/></svg><svg class="rt"><use href="#nrm2"/></svg><svg class="rt"><use href="#ptn"/></svg><svg class="rt"><use href="#prm"/></svg><svg class="rt"><use href="#prn"/></svg><svg class="rt"><use href="#crv"/></svg><svg class="rt on"><use href="#shade"/></svg><svg class="rt on"><use href="#chk"/></svg><svg class="rt"><use href="#diab"/></svg><svg class="rt"><use href="#cage"/></svg><svg class="rt"><use href="#tri"/></svg><svg class="rt"><use href="#barc"/></svg><svg class="rt on"><use href="#bg"/></svg><i class="rgap"></i><svg class="rt on"><use href="#mappin"/></svg>
          <i class="fill"></i>
          <svg class="rt"><use href="#info"/></svg><svg class="rt on"><use href="#chk"/></svg><svg class="rt"><use href="#bg"/></svg>
        </aside>
      </div>
    </section>

    <div class="vsplit"></div>

    <section class="pane-right">
      <div class="params">
        <div class="ptabs">
          <span class="ptab green it">polyextrude2<i>×</i></span><span class="ptab">Take List<i>×</i></span><span class="ptab">Performance Monitor<i>×</i></span><b class="plus">+</b><i class="fill"></i><i class="sq"></i><i class="dn"></i>
        </div>
        <div class="pathrow">
          <svg class="nav"><use href="#back"/></svg><svg class="nav"><use href="#fwd"/></svg>
          <div class="pathbar"><svg class="pi"><use href="#clap"/></svg><span>obj</span><i class="chev"></i><svg class="pi"><use href="#obj"/></svg><span>Pavillion</span><i class="fill"></i><i class="pdrop"></i></div>
          <svg class="i18 pinb"><use href="#pin"/></svg><svg class="i18 tgt"><use href="#target"/></svg>
        </div>
        <div class="nodehead">
          <svg class="i18"><use href="#polyx"/></svg><b>PolyExtrude</b><span class="namefield">polyextrude2</span>
          <svg class="i18"><use href="#gear"/></svg><svg class="i18"><use href="#brush"/></svg><svg class="i18"><use href="#mag"/></svg><svg class="i18"><use href="#info"/></svg><svg class="i18"><use href="#help"/></svg>
        </div>
        <div class="pbody">
          <div class="pscroll">
            <div class="cut"></div>
            <div class="prow"><label>Distance</label><span class="num bold">-0.245289</span><div class="slider"><i class="blue b-dist"></i><i class="knob"></i><i class="rest"></i></div></div>
            <div class="prow"><label>Inset</label><span class="num red">0</span><div class="slider"><i class="blue b-mid"></i><i class="knob"></i><i class="rest"></i></div></div>
            <div class="prow"><label>Twist</label><span class="num">0</span><div class="slider"><i class="blue b-mid"></i><i class="knob"></i><i class="rest"></i></div></div>
            <div class="prow"><label>Divisions</label><span class="num">1</span><div class="slider"><i class="knob"></i><i class="rest"></i></div></div>
            <div class="prow"><label>Spine Shape</label><div class="dd dd-spine"><span>Straight</span><i class="updn"></i></div></div>
            <div class="ftabs"><span class="on">Extrusion</span><span>Spine Control</span><span>Local Control</span></div>
            <div class="folder">
              <h4>Front Transform</h4>
              <div class="fbody fb1"><div class="crow"><i class="cb"></i><span>Transform Extruded Front</span></div></div>
              <h4>Output Geometry and Groups</h4>
              <div class="fbody fb2">
                <div class="crow"><i class="cb yes"></i><span>Output Front</span></div>
                <div class="frow"><i class="cb"></i><label>Front Group</label><span class="gfield">extrudeFront</span></div>
                <div class="crow"><i class="cb"></i><span>Output Back</span></div>
                <div class="frow"><i class="cb"></i><label>Back Group</label><span class="gfield">extrudeBack</span></div>
                <div class="crow"><i class="cb yes"></i><span>Output Side</span></div>
                <div class="frow"><i class="cb"></i><label>Side Group</label><span class="gfield">extrudeSide</span></div>
                <div class="frow sp"><i class="cb"></i><label>Front Boundary Gr...</label><span class="gfield">extrudeFrontSeam</span></div>
                <div class="frow sp"><i class="cb"></i><label>Back Boundary Gr...</label><span class="gfield">extrudeBackSeam</span></div>
                <div class="crow"><i class="cb yes"></i><span>Preserve Groups</span></div>
              </div>
              <h4>Insetting</h4>
              <div class="fbody fb3">
                <div class="crow"><i class="cb yes"></i><span>Limit Insetting</span></div>
                <div class="crow"><i class="cb yes"></i><span>Use Common Limit</span></div>
              </div>
            </div>
          </div>
          <div class="pbar"><i></i></div>
        </div>
        <div class="hsplit"></div>
      </div>

      <div class="network-pane">
        <div class="ptabs">
          <span class="ptab green it">/obj/Pavillion<i>×</i></span><span class="ptab">Tree View<i>×</i></span><span class="ptab">Material Palette<i>×</i></span><span class="ptab">Asset Browser<i>×</i></span><b class="plus">+</b><i class="fill"></i><i class="sq"></i><i class="dn"></i>
        </div>
        <div class="pathrow short">
          <svg class="nav"><use href="#back"/></svg><svg class="nav"><use href="#fwd"/></svg>
          <div class="pathbar"><svg class="pi"><use href="#clap"/></svg><span>obj</span><i class="chev"></i><svg class="pi"><use href="#obj"/></svg><span>Pavillion</span><i class="fill"></i><i class="pdrop"></i></div>
          <svg class="i18 pinb"><use href="#pin"/></svg><svg class="i18 tgt"><use href="#target"/></svg>
        </div>
        <div class="netmenu">
          <span class="grip"></span>
          <div class="menu"><span>Add</span><span>Edit</span><span>Go</span><span>View</span><span>Tools</span><span>Layout</span><span>Labs</span><span>Help</span></div>
          <i class="fill"></i>
          <svg class="i16"><use href="#tri"/></svg><svg class="i16"><use href="#dots"/></svg><svg class="i16"><use href="#padlock"/></svg><svg class="i16 gapl"><use href="#chk"/></svg><svg class="i16"><use href="#dots"/></svg><svg class="i16 gapl"><use href="#bg"/></svg><svg class="i16"><use href="#area"/></svg><svg class="i16"><use href="#chan"/></svg><svg class="i16"><use href="#file"/></svg><svg class="i16 gapl"><use href="#mag"/></svg><svg class="i16"><use href="#bg"/></svg>
        </div>
        <div class="net">
          <svg viewBox="1375 871 1249 525" preserveAspectRatio="none">
            <text x="1920" y="902" class="wm">Education Edition</text>
            <text x="2614" y="910" class="geo" text-anchor="end">Geometry</text>
            <circle cx="1978" cy="1180" r="71.500" fill="#734871"/><circle cx="1978" cy="1180" r="63" fill="#42689a"/><circle cx="1978" cy="1180" r="49" fill="#9075c8"/>
            <path d="M1978 957V1018" stroke="#4d7fb8" stroke-width="1.400"/>
            <path d="M1978 1085L1949 1146" stroke="#9aa870" stroke-width="1.400"/>
            <path d="M1978 1213V1357" stroke="#7f9a58" stroke-width="1.400"/>
            <path d="M1978 1085L2080 1396" stroke="#5d8ac4" stroke-width="1.400"/>
            <use href="#nodebody" x="1907" y="902" width="143" height="43"/>
            <use href="#nodebody" x="1907" y="1029" width="143" height="43"/>
            <use href="#nodebody" x="1907" y="1159" width="143" height="43"/>
            <path d="M2013 1160L2008 1202H2028L2033 1160Z" fill="#dd7ad4"/><path d="M2033 1160L2028 1202H2042Q2049 1202 2049 1195V1167Q2049 1160 2042 1160Z" fill="#00aeef"/>
            <rect x="1906" y="1158" width="145" height="45" rx="7" fill="none" stroke="#111" stroke-width="1.200"/>
            <rect x="1905" y="1157" width="147" height="47" rx="8" fill="none" stroke="#ffcc00" stroke-width="2"/>
            <use href="#nodebody" x="1907" y="1369" width="143" height="43"/>
            <use href="#tube" x="1961" y="905" width="34" height="36"/>
            <use href="#xfb" x="1959" y="1033" width="38" height="36"/>
            <use href="#polyx" x="1959" y="1161" width="38" height="38"/>
            <circle cx="1978" cy="1391" r="17" fill="#ddd" stroke="#888"/><path d="M1978 1378l19 13-19 13-19-13z" fill="#e3831f"/>
            <g fill="#b5b5b5"><circle cx="1978" cy="890" r="7"/><circle cx="1978" cy="957" r="7"/><circle cx="1978" cy="1018" r="7"/><circle cx="1978" cy="1085" r="7"/><circle cx="1949" cy="1146" r="7"/><circle cx="2007" cy="1146" r="7"/><circle cx="1978" cy="1213" r="7"/><circle cx="1978" cy="1357" r="7"/></g>
            <text x="2065" y="934" class="nl">tube1</text><text x="2065" y="1062" class="nl">transform1</text><text x="2065" y="1190" class="nl">polyextrude2</text><text x="2065" y="1400" class="nl">reverse2</text>
          </svg>
        </div>
      </div>
    </section>
  </main>

  <section class="timeline">
    <span class="grip"></span>
    <div class="tl-main">
      <div class="tl-row1">
        <div class="btns"><span class="pb"><svg viewBox="0 0 16 16"><path d="M2 3h2v10H2zM9 3v10L4 8zM15 3v10L10 8z" fill="#bbb"/></svg></span><span class="pb"><svg viewBox="0 0 16 16"><path d="M12 2v12L4 8z" fill="#ccc"/></svg></span><span class="pb on"><svg viewBox="0 0 16 16"><rect x="3" y="2" width="10" height="12" fill="#ddd"/></svg></span><span class="pb"><svg viewBox="0 0 16 16"><path d="M4 2v12l8-6z" fill="#ccc"/></svg></span><span class="pb"><svg viewBox="0 0 16 16"><path d="M14 3v10h-2V3zM1 3v10l5-5zM7 3v10l5-5z" fill="#bbb"/></svg></span></div>
        <span class="frame">1</span>
        <div class="btns step"><span class="pb"><svg viewBox="0 0 12 16"><path d="M8 4v8L2 8zM9 4h2v8H9z" fill="#aaa"/></svg></span><span class="pb"><svg viewBox="0 0 12 16"><path d="M4 4v8l6-4zM1 4h2v8H1z" fill="#aaa"/></svg></span></div>
        <div class="ruler">
          <span class="flag">1</span>
          <div class="rcells"><span></span><span>24</span><span>48</span><span>72</span><span>96</span><span>120</span><span>144</span><span>168</span><span>192</span><span>216</span><span class="clip">24</span></div>
        </div>
      </div>
      <div class="tl-row2">
        <div class="btns small"><span class="pb"><svg><use href="#docc"/></svg></span><span class="pb"><svg><use href="#speak"/></svg></span><span class="pb"><svg><use href="#undo"/></svg></span><span class="pb"><svg><use href="#clock"/></svg></span><span class="pb"><svg><use href="#barsi"/></svg></span><span class="pb"><svg><use href="#sldi"/></svg></span></div>
        <div class="btns small dim"><span class="pb"><svg viewBox="0 0 16 16"><path d="M4 4h2v8H4zM13 4v8L7 8z" fill="#4d6a4d"/></svg></span><span class="pb"><svg viewBox="0 0 16 16"><path d="M3 4v8l6-4zM10 4h2v8h-2z" fill="#4d6a4d"/></svg></span></div>
        <span class="rfield">1</span><span class="rfield dark">1</span>
        <div class="range"><i class="ra l"></i><i class="rb"></i><i class="ra r"></i></div>
        <span class="rfield dark mono">240</span><span class="rfield mono">240</span>
      </div>
    </div>
    <div class="key">
      <div class="keydial"><svg class="i30"><use href="#keys"/></svg></div><i class="keydrop"></i>
    </div>
    <div class="chan">
      <div class="chrow"><svg class="chi"><use href="#chan"/></svg><span class="chbtn">0 keys, 0/0 channels<i class="up"></i></span></div>
      <div class="chrow"><svg class="chi"><use href="#wave"/></svg><span class="chbtn alt">Key All Channels<i class="updn"></i></span></div>
    </div>
  </section>

  <footer class="status">
    <i class="fill"></i>
    <div class="upd"><svg class="i18"><use href="#brain"/></svg><svg class="i18"><use href="#sync"/></svg><span>Auto Update</span><i class="updn"></i></div>
  </footer>
</div>
</body>
</html>
```
FILE: styles.css
```css
* { box-sizing: border-box; }
html, body { margin: 0; height: 100%; }
body { background: #fff; padding: 53px 0 0 65px; overflow: hidden; font-family: Lato, sans-serif; font-size: 11.200px; color: #bdbdbd; }
i { font-style: normal; display: block; flex: none; }
.defs { position: absolute; }
.fill { flex: 1 1 0; min-width: 0; }
.app { width: 2559px; height: 1440px; display: flex; flex-direction: column; background: #2e2e2e; overflow: hidden; }

.titlebar { height: 28px; flex: none; background: #2b3136; display: flex; align-items: center; justify-content: center; position: relative; }
.logo { position: absolute; left: 3px; top: 4px; width: 20px; height: 20px; }
.title-text { font-family: "Noto Sans", sans-serif; font-size: 13.500px; letter-spacing: -.27px; color: #cdcdcd; }
.winbtns { position: absolute; right: 4px; top: 7px; display: flex; gap: 11px; }
.winbtns svg { width: 13px; height: 13px; }

.grip { width: 7px; flex: none; align-self: stretch; background: #3c3c3c; border-right: 1px solid #1a1a1a; position: relative; }
.grip::before { content: ""; position: absolute; left: 1px; top: 2px; border: 3px solid transparent; border-bottom: 6px solid #0a0a0a; border-top: 0; }

.menubar { height: 25px; flex: none; background: #3a3a3a; display: flex; align-items: center; border-bottom: 1px solid #111; }
.menu { display: flex; gap: 10.500px; padding: 0 0 0 9px; font-size: 12px; color: #c4c4c4; }
.menubar .menu { width: 307px; }
.combo { height: 23px; display: flex; align-items: center; gap: 5px; background: linear-gradient(#444, #383838); color: #bdbdbd; font-size: 12.500px; padding-left: 6px; position: relative; }
.c-build { width: 126px; }
.c-main { width: 126px; margin-left: 5px; }
.c-desk { width: 172px; border: 1px solid #2a2a2a; gap: 2px; padding-left: 4px; }
.ci { width: 14px; height: 14px; flex: none; }
.ci-lg { width: 18px; height: 16px; }
.combo .updn { position: absolute; right: 0; top: 0; bottom: 0; width: 24px; background-color: #333; }
.updn { background: no-repeat center; position: relative; }
.updn::before, .updn::after { content: ""; position: absolute; left: 50%; margin-left: -3px; border: 3px solid transparent; }
.updn::before { bottom: 52%; border-bottom: 5px solid #8c8c8c; border-top: 0; }
.updn::after { top: 56%; border-top: 5px solid #8c8c8c; border-bottom: 0; }
.i16 { width: 16px; height: 16px; flex: none; }
.i18 { width: 18px; height: 18px; flex: none; }
.i30 { width: 30px; height: 30px; }
.helpbtn { margin: 0 8px 0 8px; }

.shelves { height: 58px; flex: none; display: flex; background: #2e2e2e; border-bottom: 1px solid #111; }
.shelf { display: flex; flex-direction: column; min-width: 0; }
.shelf-l { width: 1277px; }
.shelf-r { flex: 1; }
.shelf-sep { width: 11px; flex: none; background: #333; border: 1px solid #1b1b1b; border-width: 0 1px; }
.shelf-tabs { height: 19px; flex: none; display: flex; align-items: stretch; background: #2f2f2f; }
.shelf-l .shelf-tabs { padding-left: 4px; }
.stab { padding: 3px 7px 0; background: #2b2b2b; border-right: 1px solid #0d0d0d; border-top: 1px solid #111; color: #ababab; font-size: 10.300px; letter-spacing: -.6px; white-space: nowrap; }
.stab.on { background: #464646; color: #bbb; }
.plus { color: #ddd; font: bold 17px/18px "Liberation Sans", sans-serif; margin: 0 0 0 12px; }
.dn { width: 0; height: 0; border: 4px solid transparent; border-top: 6px solid #bbb; border-bottom: 0; align-self: center; margin-right: 6px; }
.shelf-tools { height: 38px; display: flex; background: linear-gradient(#494949, #353535); }
.shelf-l .shelf-tools { padding-left: 4px; }
.tool { min-width: 41px; padding: 0 5px; display: flex; flex-direction: column; align-items: center; font-size: 10.300px; letter-spacing: -.65px; line-height: 10px; white-space: nowrap; color: #aeaeae; text-align: center; }
.tool svg { width: 22px; height: 22px; margin-top: 2px; flex: none; }
.tool span:last-child { margin-top: 3px; }
.tool.two span:last-child { margin-top: -2px; line-height: 9.500px; font-size: 10px; letter-spacing: -.5px; }
.tool.two svg { height: 19px; width: 20px; }
.w68 { min-width: 68px; } .w66 { min-width: 66px; } .w72 { min-width: 72px; }
.t-font { font: bold 26px/24px "Liberation Serif", serif; color: #c9ced2; height: 24px; letter-spacing: 0; }

.work { height: 1232px; flex: none; display: flex; }
.pane-left { width: 1302px; flex: none; display: flex; flex-direction: column; }
.vsplit { width: 8px; flex: none; background: #2c2c2c; }
.pane-right { flex: 1; min-width: 0; display: flex; flex-direction: column; }

.ptabs { height: 20px; flex: none; display: flex; align-items: stretch; background: #2c2c2c; padding-left: 7px; }
.pane-right .ptabs { padding-left: 0; }
.pane-left .ptabs .plus { margin-left: 6px; }
.ptab { display: flex; align-items: center; justify-content: space-between; gap: 10px; padding: 0 6px; background: #262626; color: #b9b9b9; font-size: 11px; letter-spacing: -.4px; margin-right: 1px; border-right: 1px solid #1a1a1a; white-space: nowrap; }
.ptab i { font: 10px "Liberation Sans", sans-serif; color: #bbb; }
.ptab.green { background: #7a9172; color: #b7c6b0; }
.t-anim { padding-right: 9px; }
.ptab.brown { background: #5a5045; margin-left: 2px; padding-right: 3px; }
.ptab.olive { background: #3b4237; }
.ptab.moss { background: #425040; margin-left: 2px; }
.ptab.it { font-style: italic; width: 91px; }
.sq { width: 10px; height: 10px; background: #d4d4d4; align-self: center; margin-right: 8px; }

.pathrow { height: 33px; flex: none; display: flex; align-items: center; padding: 5px 0 3px 4px; background: linear-gradient(#7d9376 0, #7d9376 6px, #3d423b 100%); }
.pathrow.short { height: 29px; padding: 4px 0 0 4px; background: linear-gradient(#7d9376 0, #7d9376 5px, #3d423b 100%); }
.pane-left .pathrow { padding-left: 11px; }
.nav { width: 18px; height: 18px; flex: none; margin-right: 5px; }
.pathbar { flex: 1; height: 24px; min-width: 0; display: flex; align-items: center; gap: 5px; background: #3b3b3b; border: 1px solid #111; padding-left: 3px; color: #c0c0c0; font-size: 11.500px; margin-left: 5px; }
.pi { width: 18px; height: 18px; flex: none; }
.chev { width: 9px; height: 20px; background: linear-gradient(to bottom right, transparent 48%, #111 48%, #111 54%, transparent 54%) top/100% 50% no-repeat, linear-gradient(to top right, transparent 48%, #111 48%, #111 54%, transparent 54%) bottom/100% 50% no-repeat; }
.pdrop { width: 18px; height: 22px; background: #333; position: relative; }
.pdrop::after { content: ""; position: absolute; left: 5px; top: 9px; border: 4px solid transparent; border-top: 6px solid #777; border-bottom: 0; }
.pinb { margin-left: 10px; }
.pane-right .pinb { margin-left: 6px; }
.tgt { margin-left: 5px; }
.pane-right .tgt { margin-left: 8px; margin-right: 4px; }
.cube { margin-left: 16px; }
.dotg { margin-left: 9px; }
.gapl6 { margin-left: 5px; }
.whitesq { width: 15px; height: 18px; background: #d8d8d8; margin: 0 5px 0 4px; }

.viewbar { height: 33px; flex: none; display: flex; align-items: center; background: #2d2d2d; border-top: 1px solid #161616; border-bottom: 1px solid #111; padding-left: 7px; padding-right: 4px; }
.vdots { margin-left: 7px; }
.vtools { display: flex; align-items: center; height: 100%; margin-left: 274px; }
.vt { width: 24px; height: 24px; padding: 2px; flex: none; }
.vt.on { background: #5a7ea6; }
.vsep { width: 1px; height: 24px; background: #4a4a4a; margin: 0 2px 0 6px; }
.dd { width: 99px; height: 23px; display: flex; align-items: center; background: linear-gradient(#464646, #3a3a3a); color: #bbb; border: 1px solid #222; padding-left: 14px; margin-right: 12px; font-size: 11.500px; position: relative; }
.dd-sel { margin-left: 3px; }
.dd span { flex: 1; }
.dd .dn { border-top-color: #888; margin-right: 7px; }

.viewrow { flex: 1; min-height: 0; display: flex; padding-left: 7px; background: #2e2e2e; }
.ltools { width: 34px; flex: none; background: #3a3a3a; display: flex; flex-direction: column; align-items: center; padding-bottom: 4px; }
.handle { height: 9px; align-self: stretch; background: #333; border-bottom: 1px solid #111; flex: none; }
.lgroup { display: flex; flex-direction: column; margin-top: 7px; border: 1px solid #111; border-top-color: #444; background: #3f3f3f; }
.lt { width: 24px; height: 23.500px; padding: 1px; flex: none; }
.ltools > .lt { height: 28px; width: 28px; padding: 3px; }
.lt.on { background: #5a7ea6; }
.lsep { height: 1px; width: 26px; background: #4f4f4f; margin: 4px 0 5px; flex: none; }
.lsep.first { margin: 5px 0 5px; }
.viewport { width: 1237px; flex: none; position: relative; overflow: hidden; background: linear-gradient(#617a88, #8fa1a9 50%, #bfcacb); }
.floor { position: absolute; left: 0; top: 0; width: 12000px; height: 5400px; transform-origin: 0 0; transform: matrix3d(-.953,-.01646,0,.0001176, 1.0149,-.1228,0,.000877, 0,0,1,0, 400,1000,0,1) translate(-6000px,-400px);
  background:
    linear-gradient(90deg, rgba(70,88,98,.5) 2px, transparent 2px) 0 0/330px 180px,
    linear-gradient(0deg, rgba(70,88,98,.5) 2px, transparent 2px) 0 0/330px 180px,
    linear-gradient(90deg, rgba(70,88,98,.38) 1px, transparent 1px) 0 0/66px 36px,
    linear-gradient(0deg, rgba(70,88,98,.38) 1px, transparent 1px) 0 0/66px 36px; }
.fog { position: absolute; inset: 0; background: linear-gradient(#617a88 0, #63808c 130px, rgba(110,135,148,.6) 240px, rgba(130,150,160,0) 420px); }
.ring { position: absolute; left: 214px; top: 430px; width: 1000px; height: 660px; }
.vhead { position: absolute; left: 15px; top: 14px; display: flex; align-items: center; gap: 9px; color: #fff; font: bold 14.500px Lato, sans-serif; text-shadow: 1px 1px 2px #222; }
.vhead svg { width: 26px; height: 26px; }
.vpills { position: absolute; right: 6px; top: 6px; display: flex; align-items: center; gap: 3px; }
.pill { height: 20px; padding: 0 5px; border: 1px solid #9db0b8; border-radius: 10px; color: #d6dde0; font: 11.500px/18px Lato, sans-serif; white-space: nowrap; margin-left: 4px; }
.edu { position: absolute; left: 1134px; top: 1122px; color: #bcae34; font-size: 12px; }
.axis { position: absolute; left: 2px; top: 1116px; width: 20px; height: 20px; }
.rtools { width: 24px; flex: none; background: #383838; display: flex; flex-direction: column; align-items: center; padding-bottom: 2px; }
.rt { width: 22px; height: 25px; padding: 2px; flex: none; }
.rt.on { background: #5a7ea6; }
.rtools .handle { margin-bottom: 4px; }
.rtools .lsep { width: 22px; margin: 2px 0; }
.rgap { height: 11px; flex: none; }

.params { height: 629px; flex: none; display: flex; flex-direction: column; background: #3a3a3a; }
.nodehead { height: 28px; flex: none; display: flex; align-items: center; gap: 7px; padding: 0 6px 0 5px; background: #303030; border-bottom: 1px solid #111; }
.nodehead b { font: bold 12px Lato, sans-serif; color: #d0d0d0; margin-left: -2px; }
.namefield { flex: 1; height: 27px; background: #111; color: #ccc; font: 12px/28px "DejaVu Sans Mono", monospace; padding-left: 4px; margin-right: 8px; margin-left: -3px; }
.pbody { flex: 1; min-height: 0; display: flex; overflow: hidden; }
.pscroll { flex: 1; min-width: 0; }
.pbar { width: 14px; flex: none; background: #333; padding: 30px 2px 0 5px; }
.pbar i { height: 330px; background: #3d3d3d; }
.cut { height: 9px; width: 160px; margin-left: 155px; background: #414141; border: 1px solid #1f1f1f; border-top: 0; }
.prow { height: 25px; display: flex; align-items: center; }
.prow label { width: 139px; text-align: right; color: #b6b6b6; margin-right: 16px; flex: none; }
.num { width: 73px; height: 22px; flex: none; background: #1a1a1a; font: 12px/22px "DejaVu Sans Mono", monospace; color: #c5c5c5; padding-left: 3px; }
.num.bold { font-weight: bold; color: #eee; }
.num.red { border: 1px solid #a01818; line-height: 20px; padding-left: 2px; }
.slider { flex: 1; height: 6px; margin: 0 12px 0 5px; display: flex; align-items: center; position: relative; }
.slider .blue { height: 5px; background: #1e5aa8; border: 1px solid #0a0a0a; }
.b-dist { width: 370px; } .b-mid { width: 492px; }
.knob { width: 5px; height: 22px; background: #9a9a9a; border: 1px solid #333; flex: none; }
.slider .rest { flex: 1; height: 4px; background: #060606; border-radius: 2px; }
.dd-spine { width: 160px; height: 20px; margin: 0; border-color: #1c1c1c; padding-left: 12px; font-size: 11.200px; }
.dd-spine .updn { width: 16px; height: 100%; background: #333; }
.ftabs { display: flex; height: 24px; padding: 3px 0 0 3px; border-bottom: 1px solid #5a5a5a; }
.ftabs span { display: block; padding: 3px 7px 0; background: #333; border: 1px solid #222; border-bottom: 0; color: #bbb; min-width: 60px; text-align: center; }
.ftabs span.on { background: #3d3d3d; }
.folder { padding: 6px 1px 0 9px; }
.folder h4 { margin: 0; height: 24px; background: #505050; font-weight: normal; font-size: 11px; color: #b9b9b9; line-height: 24px; padding-left: 20px; }
.fbody { background: #343434; margin-bottom: 2px; }
.fb1 { height: 29px; padding-top: 3px; }
.fb2 { height: 217px; padding-top: 3px; }
.fb3 { height: 52px; padding-top: 3px; }
.crow { height: 23px; display: flex; align-items: center; padding-left: 145px; gap: 7px; color: #bdbdbd; }
.fb3 .crow { height: 21px; }
.cb { width: 14px; height: 14px; background: #161616; border: 1px solid #3f3f3f; flex: none; position: relative; }
.cb.yes::after { content: ""; position: absolute; left: 3px; top: 0; width: 6px; height: 10px; border: solid #f0f0f0; border-width: 0 3px 3px 0; transform: rotate(35deg) skewX(-8deg); }
.frow { height: 23px; display: grid; grid-template-columns: 14px 107px 1fr; align-items: center; padding-left: 10px; color: #7b7b7b; }
.frow.sp { margin-top: 2px; }
.frow label { text-align: right; white-space: nowrap; font-size: 11px; letter-spacing: -.1px; }
.gfield { height: 23px; margin-left: 14px; margin-right: 5px; background: #2c2c2c; font: 12px/23px "DejaVu Sans Mono", monospace; color: #525252; padding-left: 4px; }
.hsplit { height: 7px; flex: none; background: #2e2e2e; border-top: 1px solid #666; }

.network-pane { flex: 1; min-height: 0; display: flex; flex-direction: column; }
.netmenu { height: 24px; margin-top: 5px; flex: none; display: flex; align-items: center; background: #3a3a3a; border-top: 1px solid #111; border-bottom: 1px solid #111; gap: 8px; padding-right: 6px; }
.netmenu .menu { gap: 15px; padding-left: 3px; }
.netmenu .gapl { margin-left: 14px; }
.net { flex: 1; min-height: 0; background: #2f2f2f; overflow: hidden; }
.net svg { display: block; width: 1249px; height: 525px; }
.nl { font: 29.500px Lato, sans-serif; fill: #c9c9c9; }
.wm { font: 20px Lato, sans-serif; fill: #434343; }
.geo { font: bold 26px Lato, sans-serif; fill: #555; }

.timeline { height: 71px; flex: none; display: flex; background: #333; border-top: 1px solid #5a5a5a; border-bottom: 1px solid #0a0a0a; }
.timeline > .grip { width: 10px; }
.tl-main { width: 2298px; flex: none; display: flex; flex-direction: column; padding-left: 5px; }
.tl-row1 { height: 38px; display: flex; align-items: flex-start; padding-top: 7px; }
.btns { display: flex; flex: none; }
.pb { width: 27px; height: 28px; display: flex; align-items: center; justify-content: center; background: linear-gradient(#484848, #3a3a3a); border: 1px solid #222; }
.pb.on { background: #5a7ea6; }
.pb svg { width: 16px; height: 16px; }
.frame { width: 47px; height: 28px; flex: none; margin-left: 4px; background: #161616; font: 12px/28px "DejaVu Sans Mono", monospace; color: #ccc; padding-left: 4px; }
.step { margin-left: 2px; }
.step .pb { width: 14px; }
.step .pb svg { width: 12px; }
.ruler { flex: 1; height: 32px; margin: -4px 0 0 6px; position: relative; }
.flag { position: absolute; left: -1px; top: 0; width: 24px; height: 18px; background: #111; border: 1px solid #ddd; color: #eee; text-align: center; font: 12px/16px "DejaVu Sans", sans-serif; z-index: 1; }
.rcells { display: grid; grid-template-columns: 198px repeat(9, 206.900px) 8px; height: 32px; background: repeating-linear-gradient(90deg, #9b9b9b 0, #9b9b9b 1px, transparent 1px, transparent 8.620px) 0 18px/100% 9px no-repeat, linear-gradient(#b5b5b5, #b5b5b5) 0 22px/100% 1px no-repeat; }
.rcells span { font-size: 10.500px; line-height: 12px; color: #8f8f8f; padding-left: 1px; border-left: 1px solid #a8a8a8; height: 29px; overflow: hidden; }
.rcells span:first-child { border-left: 0; }
.tl-row2 { height: 30px; display: flex; align-items: center; }
.small .pb { height: 24px; width: 26.600px; }
.small .pb svg { width: 17px; height: 17px; }
.small.dim { margin-left: 5px; }
.small.dim .pb { width: 22.500px; }
.rfield { width: 43px; height: 22px; flex: none; background: #262626; font: 12px/22px "DejaVu Sans Mono", monospace; color: #ccc; padding-left: 4px; margin-right: 2px; }
.tl-row2 > .rfield:first-of-type { margin-left: 10px; }
.rfield.dark { background: #171717; }
.range { flex: 1; display: flex; align-items: center; min-width: 0; margin-right: 4px; }
.rb { flex: 1; height: 3px; background: #777; }
.ra { width: 0; height: 0; border: 6px solid transparent; }
.ra.l { border-left: 6px solid #aaa; border-right: 0; }
.ra.r { border-right: 6px solid #aaa; border-left: 0; }
.key { width: 64px; flex: none; display: flex; align-items: center; }
.keydial { width: 42px; height: 42px; margin-left: 3px; border-radius: 50%; background: #303030; border: 1px solid #444; display: flex; align-items: center; justify-content: center; margin-top: 1px; z-index: 1; }
.keydrop { width: 16px; height: 19px; margin-left: -1px; background: #3f3f3f; position: relative; }
.keydrop::after { content: ""; position: absolute; left: 4px; top: 7px; border: 4px solid transparent; border-top: 5px solid #999; border-bottom: 0; }
.chan { flex: 1; display: flex; flex-direction: column; gap: 4px; padding: 9px 4px 0 0; }
.chrow { display: flex; height: 24px; gap: 6px; }
.chi { width: 22px; height: 24px; flex: none; }
.chbtn { flex: 1; display: flex; align-items: center; justify-content: center; padding-right: 22px; position: relative; background: linear-gradient(#484848, #3a3a3a); border: 1px solid #222; color: #bbb; font: 11.500px Lato, sans-serif; }
.chbtn .up { position: absolute; right: 8px; top: 8px; border: 4px solid transparent; border-bottom: 6px solid #777; border-top: 0; }
.chbtn .updn { position: absolute; right: 0; top: 0; bottom: 0; width: 22px; background: #333; }
.timeline .chbtn.alt { justify-content: flex-start; padding-left: 14px; }

.status { flex: 1; min-height: 0; display: flex; background: #1b1b1b; }
.upd { width: 171px; display: flex; align-items: center; background: #3a3a3a; padding-left: 2px; gap: 12px; color: #c0c0c0; font: 11.500px Lato, sans-serif; }
.upd span { flex: 1; text-align: center; background: #444; line-height: 26px; margin-left: -2px; }
.upd .updn { width: 20px; height: 100%; margin-left: -12px; }
```
